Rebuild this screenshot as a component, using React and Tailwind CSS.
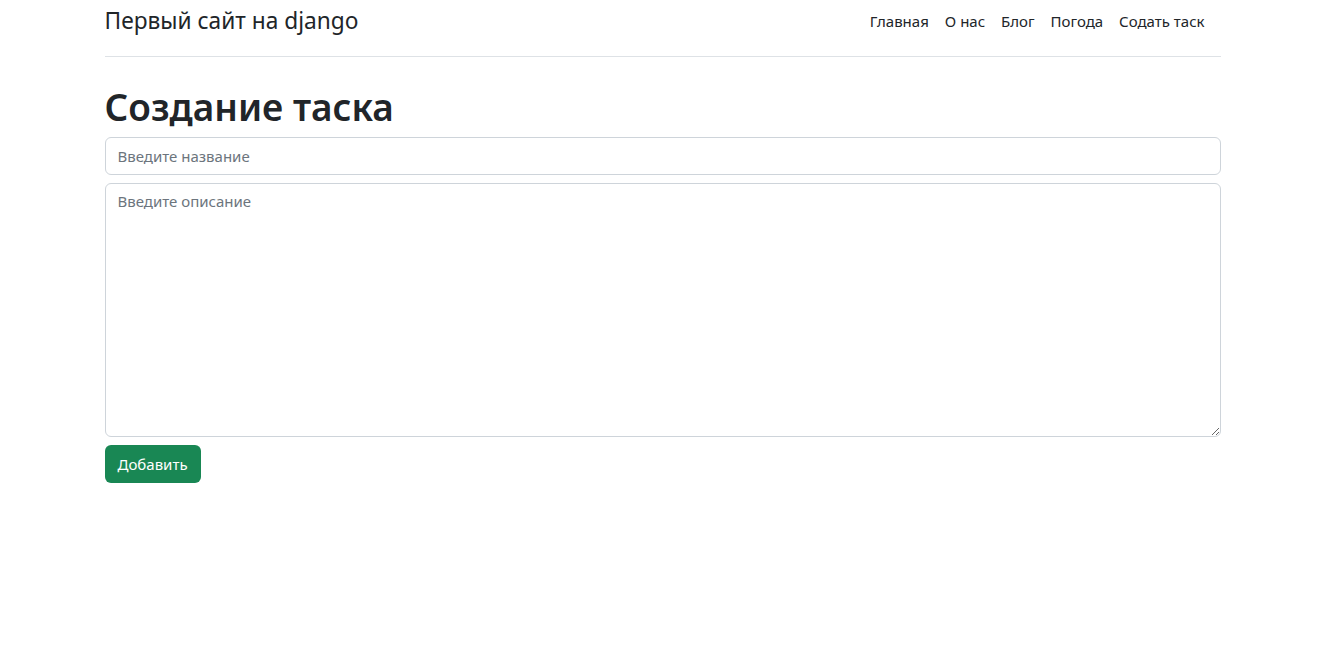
const links = ['Главная', 'О нас', 'Блог', 'Погода', 'Содать таск'];

const App = () => {
  return (
    <div className="min-h-screen bg-white text-[#212529] font-['Noto_Sans','Open_Sans',sans-serif]">
      <div className="max-w-[1140px] mx-auto px-3">
        <header className="flex items-center h-[57px] pb-[15px] border-b border-[#dee2e6]">
          <a href="#" className="text-[22.7px] leading-9 text-[#212529]">
            Первый сайт на django
          </a>
          <nav className="ml-auto flex pr-2">
            {links.map((link) => (
              <a key={link} href="#" className="px-2 py-2 text-[15px] leading-6 text-[#212529]">
                {link}
              </a>
            ))}
          </nav>
        </header>

        <h1 className="mt-[26px] mb-1.5 text-[37px] leading-[48px] font-semibold">Создание таска</h1>

        <form onSubmit={(e) => e.preventDefault()}>
          <input
            type="text"
            placeholder="Введите название"
            className="block w-full h-[38px] px-3 text-[15px] border border-[#ced4da] rounded-md placeholder:text-[#6c757d] outline-none mb-2"
          />
          <textarea
            placeholder="Введите описание"
            className="block w-full h-[254px] px-3 py-1.5 text-[15px] border border-[#ced4da] rounded-md placeholder:text-[#6c757d] outline-none mb-2"
          />
          <button
            type="submit"
            className="h-[38px] px-[13px] bg-[#198754] text-white text-[15px] rounded-md"
          >
            Добавить
          </button>
        </form>
      </div>
    </div>
  );
};

export default App;
